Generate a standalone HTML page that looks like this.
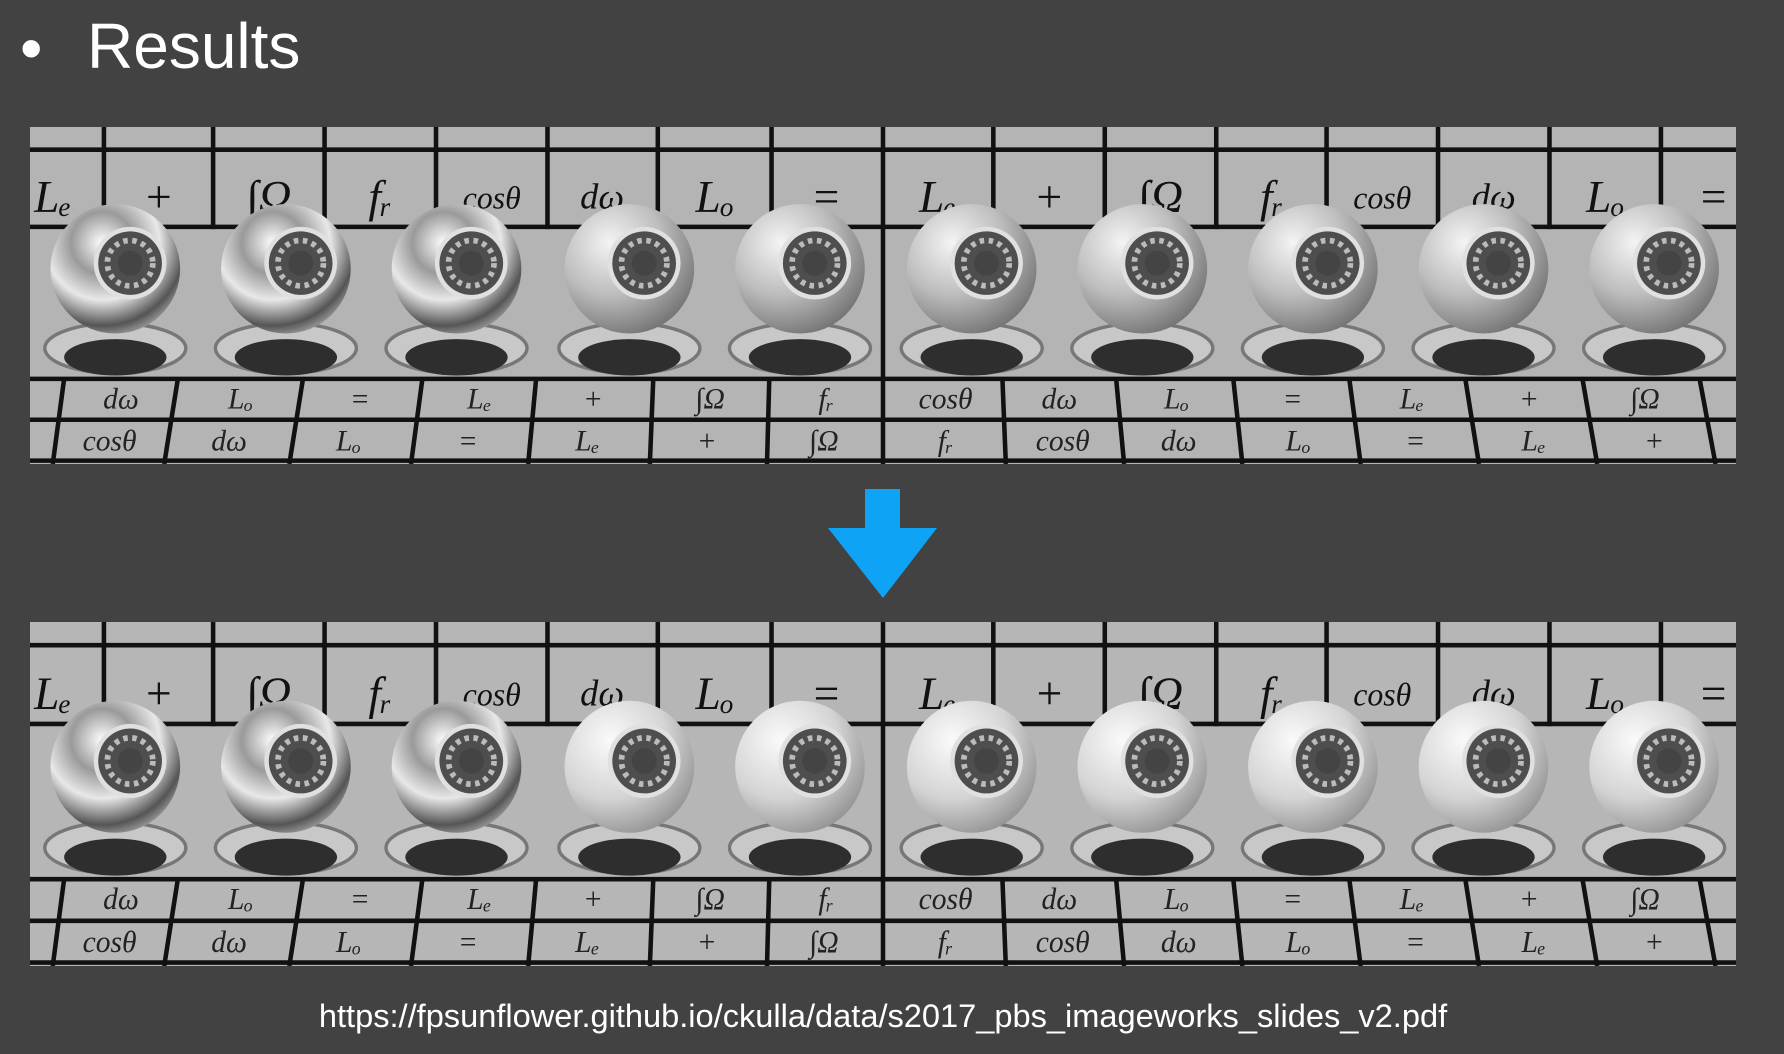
<!DOCTYPE html>
<html><head><meta charset="utf-8"><style>
html,body{margin:0;padding:0;background:#424242;width:1784px;height:1054px;overflow:hidden;position:relative;font-family:"Liberation Sans",sans-serif}
.t{position:absolute;color:#fff}
svg{position:absolute;display:block}
</style></head><body>
<div class="t" style="left:20px;top:8px;font-size:64px;line-height:80px">•</div>
<div class="t" style="left:87px;top:6px;font-size:64px;line-height:80px">Results</div>

<svg width="0" height="0" style="position:absolute">
<defs>
<radialGradient id="sg" cx="0.35" cy="0.3" r="0.8"><stop offset="0" stop-color="#f4f4f4"/><stop offset="0.5" stop-color="#bdbdbd"/><stop offset="1" stop-color="#6a6a6a"/></radialGradient>
<radialGradient id="sg2" cx="0.35" cy="0.3" r="0.8"><stop offset="0" stop-color="#fafafa"/><stop offset="0.55" stop-color="#d4d4d4"/><stop offset="1" stop-color="#8a8a8a"/></radialGradient>
<radialGradient id="mg" cx="0.4" cy="0.3" r="0.8"><stop offset="0" stop-color="#fff"/><stop offset="0.3" stop-color="#9a9a9a"/><stop offset="0.55" stop-color="#e8e8e8"/><stop offset="0.8" stop-color="#555"/><stop offset="1" stop-color="#ccc"/></radialGradient>
<g id="sp">
<ellipse cx="0" cy="70" rx="62" ry="22" fill="#c8c8c8" stroke="#777" stroke-width="3"/>
<ellipse cx="0" cy="78" rx="45" ry="16" fill="#2e2e2e"/>
<circle cx="0" cy="0" r="57" fill="inherit"/>
</g>
<g id="eye">
<circle cx="0" cy="0" r="32" fill="#e0e0e0"/>
<circle cx="0" cy="0" r="28" fill="#4e4e4e"/>
<circle cx="0" cy="0" r="20" fill="none" stroke="#bbb" stroke-width="5" stroke-dasharray="4 4"/>
<circle cx="0" cy="0" r="11" fill="#444"/>
</g>
</defs></svg>

<!-- panel 1 -->
<svg style="left:30px;top:127px" width="1706" height="337" viewBox="0 0 1500 297" preserveAspectRatio="none">
<rect width="1500" height="297" fill="#b4b4b4"/>
<g stroke="#111" stroke-width="4">
<line x1="0" y1="20" x2="1500" y2="20"/><line x1="0" y1="88" x2="1500" y2="88"/>
<line x1="0" y1="222" x2="1500" y2="222"/><line x1="0" y1="258" x2="1500" y2="258"/>
<line x1="0" y1="294" x2="1500" y2="294"/>
<line x1="65" y1="0" x2="65" y2="90"/><line x1="161" y1="0" x2="161" y2="90"/><line x1="259" y1="0" x2="259" y2="90"/><line x1="357" y1="0" x2="357" y2="90"/><line x1="455" y1="0" x2="455" y2="90"/><line x1="552" y1="0" x2="552" y2="90"/><line x1="652" y1="0" x2="652" y2="90"/><line x1="750" y1="0" x2="750" y2="297"/><line x1="847" y1="0" x2="847" y2="90"/><line x1="945" y1="0" x2="945" y2="90"/><line x1="1043" y1="0" x2="1043" y2="90"/><line x1="1140" y1="0" x2="1140" y2="90"/><line x1="1238" y1="0" x2="1238" y2="90"/><line x1="1336" y1="0" x2="1336" y2="90"/><line x1="1434" y1="0" x2="1434" y2="90"/>
<line x1="30" y1="222" x2="20" y2="297"/><line x1="130" y1="222" x2="118" y2="297"/><line x1="240" y1="222" x2="228" y2="297"/><line x1="345" y1="222" x2="335" y2="297"/><line x1="445" y1="222" x2="438" y2="297"/><line x1="548" y1="222" x2="545" y2="297"/><line x1="650" y1="222" x2="648" y2="297"/><line x1="855" y1="222" x2="858" y2="297"/><line x1="955" y1="222" x2="962" y2="297"/><line x1="1058" y1="222" x2="1066" y2="297"/><line x1="1160" y1="222" x2="1170" y2="297"/><line x1="1262" y1="222" x2="1274" y2="297"/><line x1="1365" y1="222" x2="1378" y2="297"/><line x1="1468" y1="222" x2="1482" y2="297"/>
</g>
<g font-family="Liberation Serif,serif" font-style="italic" font-size="40" fill="#111" text-anchor="middle">
<text x="20" y="75">Lₑ</text><text x="113" y="75">+</text><text x="210" y="75">∫Ω</text><text x="308" y="75">fᵣ</text><text x="406" y="72" font-size="28">cosθ</text><text x="503" y="72" font-size="32">dω</text><text x="602" y="75">Lₒ</text><text x="700" y="75">=</text><text x="798" y="75">Lₑ</text><text x="896" y="75">+</text><text x="994" y="75">∫Ω</text><text x="1092" y="75">fᵣ</text><text x="1189" y="72" font-size="28">cosθ</text><text x="1287" y="72" font-size="32">dω</text><text x="1385" y="75">Lₒ</text><text x="1480" y="75">=</text>
</g>
<g font-family="Liberation Serif,serif" font-style="italic" font-size="26" fill="#222" text-anchor="middle">
<text x="80" y="248">dω</text><text x="185" y="248">Lₒ</text><text x="290" y="248">=</text><text x="395" y="248">Lₑ</text><text x="495" y="248">+</text><text x="598" y="248">∫Ω</text><text x="700" y="248">fᵣ</text><text x="805" y="248">cosθ</text><text x="905" y="248">dω</text><text x="1008" y="248">Lₒ</text><text x="1110" y="248">=</text><text x="1215" y="248">Lₑ</text><text x="1318" y="248">+</text><text x="1420" y="248">∫Ω</text>
<text x="70" y="285">cosθ</text><text x="175" y="285">dω</text><text x="280" y="285">Lₒ</text><text x="385" y="285">=</text><text x="490" y="285">Lₑ</text><text x="595" y="285">+</text><text x="698" y="285">∫Ω</text><text x="805" y="285">fᵣ</text><text x="908" y="285">cosθ</text><text x="1010" y="285">dω</text><text x="1115" y="285">Lₒ</text><text x="1218" y="285">=</text><text x="1322" y="285">Lₑ</text><text x="1428" y="285">+</text>
</g>
<g fill="url(#mg)"><use href="#sp" x="75" y="125"/><use href="#sp" x="225" y="125"/><use href="#sp" x="375" y="125"/></g>
<g fill="url(#sg)"><use href="#sp" x="527" y="125"/><use href="#sp" x="677" y="125"/><use href="#sp" x="828" y="125"/><use href="#sp" x="978" y="125"/><use href="#sp" x="1128" y="125"/><use href="#sp" x="1278" y="125"/><use href="#sp" x="1428" y="125"/></g>
<use href="#eye" x="88" y="120"/><use href="#eye" x="238" y="120"/><use href="#eye" x="388" y="120"/><use href="#eye" x="540" y="120"/><use href="#eye" x="690" y="120"/><use href="#eye" x="841" y="120"/><use href="#eye" x="991" y="120"/><use href="#eye" x="1141" y="120"/><use href="#eye" x="1291" y="120"/><use href="#eye" x="1441" y="120"/>
</svg>

<!-- arrow -->
<svg style="left:828px;top:489px" width="110" height="110" viewBox="0 0 110 110">
<polygon points="37,0 72,0 72,39 109,39 55,109 0,39 37,39" fill="#0fa3f5"/>
</svg>

<!-- panel 2 -->
<svg style="left:30px;top:622px" width="1706" height="344" viewBox="0 0 1500 297" preserveAspectRatio="none">
<rect width="1500" height="297" fill="#b6b6b6"/>
<g stroke="#111" stroke-width="4">
<line x1="0" y1="20" x2="1500" y2="20"/><line x1="0" y1="88" x2="1500" y2="88"/>
<line x1="0" y1="222" x2="1500" y2="222"/><line x1="0" y1="258" x2="1500" y2="258"/>
<line x1="0" y1="294" x2="1500" y2="294"/>
<line x1="65" y1="0" x2="65" y2="90"/><line x1="161" y1="0" x2="161" y2="90"/><line x1="259" y1="0" x2="259" y2="90"/><line x1="357" y1="0" x2="357" y2="90"/><line x1="455" y1="0" x2="455" y2="90"/><line x1="552" y1="0" x2="552" y2="90"/><line x1="652" y1="0" x2="652" y2="90"/><line x1="750" y1="0" x2="750" y2="297"/><line x1="847" y1="0" x2="847" y2="90"/><line x1="945" y1="0" x2="945" y2="90"/><line x1="1043" y1="0" x2="1043" y2="90"/><line x1="1140" y1="0" x2="1140" y2="90"/><line x1="1238" y1="0" x2="1238" y2="90"/><line x1="1336" y1="0" x2="1336" y2="90"/><line x1="1434" y1="0" x2="1434" y2="90"/>
<line x1="30" y1="222" x2="20" y2="297"/><line x1="130" y1="222" x2="118" y2="297"/><line x1="240" y1="222" x2="228" y2="297"/><line x1="345" y1="222" x2="335" y2="297"/><line x1="445" y1="222" x2="438" y2="297"/><line x1="548" y1="222" x2="545" y2="297"/><line x1="650" y1="222" x2="648" y2="297"/><line x1="855" y1="222" x2="858" y2="297"/><line x1="955" y1="222" x2="962" y2="297"/><line x1="1058" y1="222" x2="1066" y2="297"/><line x1="1160" y1="222" x2="1170" y2="297"/><line x1="1262" y1="222" x2="1274" y2="297"/><line x1="1365" y1="222" x2="1378" y2="297"/><line x1="1468" y1="222" x2="1482" y2="297"/>
</g>
<g font-family="Liberation Serif,serif" font-style="italic" font-size="40" fill="#111" text-anchor="middle">
<text x="20" y="75">Lₑ</text><text x="113" y="75">+</text><text x="210" y="75">∫Ω</text><text x="308" y="75">fᵣ</text><text x="406" y="72" font-size="28">cosθ</text><text x="503" y="72" font-size="32">dω</text><text x="602" y="75">Lₒ</text><text x="700" y="75">=</text><text x="798" y="75">Lₑ</text><text x="896" y="75">+</text><text x="994" y="75">∫Ω</text><text x="1092" y="75">fᵣ</text><text x="1189" y="72" font-size="28">cosθ</text><text x="1287" y="72" font-size="32">dω</text><text x="1385" y="75">Lₒ</text><text x="1480" y="75">=</text>
</g>
<g font-family="Liberation Serif,serif" font-style="italic" font-size="26" fill="#222" text-anchor="middle">
<text x="80" y="248">dω</text><text x="185" y="248">Lₒ</text><text x="290" y="248">=</text><text x="395" y="248">Lₑ</text><text x="495" y="248">+</text><text x="598" y="248">∫Ω</text><text x="700" y="248">fᵣ</text><text x="805" y="248">cosθ</text><text x="905" y="248">dω</text><text x="1008" y="248">Lₒ</text><text x="1110" y="248">=</text><text x="1215" y="248">Lₑ</text><text x="1318" y="248">+</text><text x="1420" y="248">∫Ω</text>
<text x="70" y="285">cosθ</text><text x="175" y="285">dω</text><text x="280" y="285">Lₒ</text><text x="385" y="285">=</text><text x="490" y="285">Lₑ</text><text x="595" y="285">+</text><text x="698" y="285">∫Ω</text><text x="805" y="285">fᵣ</text><text x="908" y="285">cosθ</text><text x="1010" y="285">dω</text><text x="1115" y="285">Lₒ</text><text x="1218" y="285">=</text><text x="1322" y="285">Lₑ</text><text x="1428" y="285">+</text>
</g>
<g fill="url(#mg)"><use href="#sp" x="75" y="125"/><use href="#sp" x="225" y="125"/><use href="#sp" x="375" y="125"/></g>
<g fill="url(#sg2)"><use href="#sp" x="527" y="125"/><use href="#sp" x="677" y="125"/><use href="#sp" x="828" y="125"/><use href="#sp" x="978" y="125"/><use href="#sp" x="1128" y="125"/><use href="#sp" x="1278" y="125"/><use href="#sp" x="1428" y="125"/></g>
<use href="#eye" x="88" y="120"/><use href="#eye" x="238" y="120"/><use href="#eye" x="388" y="120"/><use href="#eye" x="540" y="120"/><use href="#eye" x="690" y="120"/><use href="#eye" x="841" y="120"/><use href="#eye" x="991" y="120"/><use href="#eye" x="1141" y="120"/><use href="#eye" x="1291" y="120"/><use href="#eye" x="1441" y="120"/>
</svg>

<div class="t" style="left:0;width:1766px;text-align:center;top:997px;font-size:32.6px;line-height:38px">https://fpsunflower.github.io/ckulla/data/s2017_pbs_imageworks_slides_v2.pdf</div>
</body></html>
